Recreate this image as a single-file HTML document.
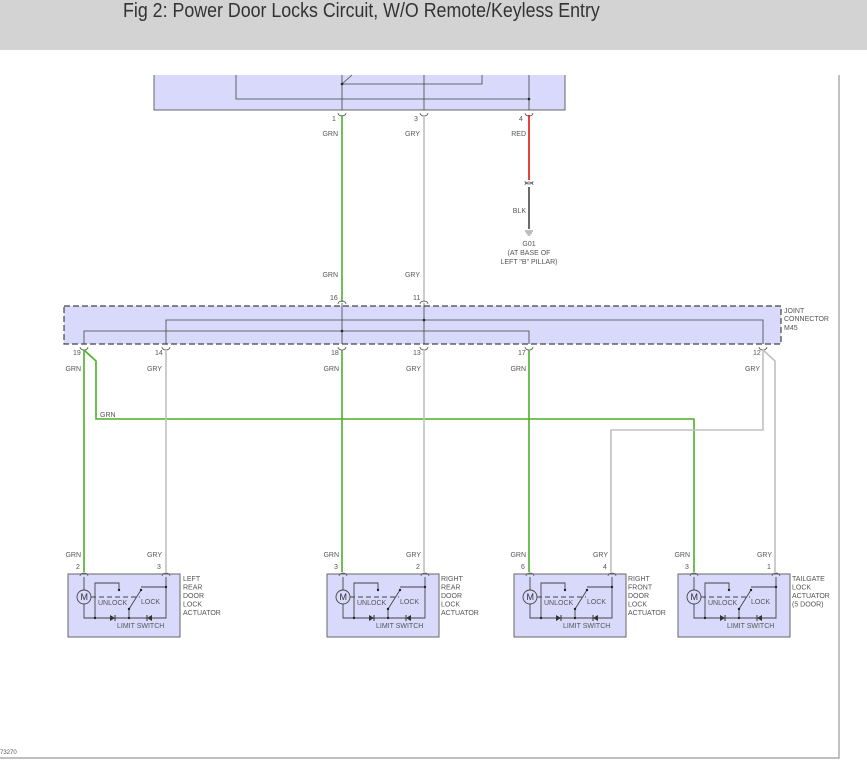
<!DOCTYPE html>
<html><head><meta charset="utf-8"><style>
html,body{margin:0;padding:0;width:867px;height:766px;overflow:hidden;background:#fff}
.hdr{position:absolute;left:0;top:0;width:867px;height:50px;background:#d3d3d3}
.hdr span{position:absolute;left:123px;top:0px;font-family:"Liberation Sans Narrow","Liberation Sans",sans-serif;font-size:20px;color:#333;transform:scaleX(0.89);transform-origin:0 0;white-space:nowrap}
svg{position:absolute;left:0;top:0}
text{font-family:"Liberation Sans",sans-serif;font-size:7px;fill:#555}
</style></head><body>
<div class="hdr"><span>Fig 2: Power Door Locks Circuit, W/O Remote/Keyless Entry</span></div>
<svg width="867" height="766" viewBox="0 0 867 766">
<defs>
<g id="act">
  <rect x="0" y="0" width="112" height="63" fill="#d9d9fb" stroke="#666" stroke-width="1"/>
  <circle cx="16" cy="23" r="7" fill="none" stroke="#444" stroke-width="0.9"/>
  <text x="12.5" y="26" style="font-size:9px;fill:#333">M</text>
  <path d="M16 3V16M16 30V44H98V3M27 44V9H51V16M73 13H98M61 35L73 16M61 35V44" fill="none" stroke="#444" stroke-width="0.9"/>
  <path d="M23 23H72" stroke="#444" stroke-width="1" stroke-dasharray="5,3"/>
  <path d="M42 41V47L47 44Z M79 44L84 41V47Z" fill="#333"/>
  <path d="M47 41V47M79 41V47" stroke="#333"/>
  <circle cx="27" cy="44" r="1.2" fill="#222"/><circle cx="61" cy="44" r="1.2" fill="#222"/><circle cx="61" cy="35" r="1.2" fill="#222"/><circle cx="73" cy="16" r="1.2" fill="#222"/><circle cx="51" cy="16" r="1.2" fill="#222"/><circle cx="98" cy="13" r="1.2" fill="#222"/>
  <text x="30" y="31">UNLOCK</text><text x="73" y="30">LOCK</text><text x="49" y="54">LIMIT SWITCH</text>
  <path d="M12 2A4 3 0 0 1 20 2M94 2A4 3 0 0 1 102 2" fill="none" stroke="#555" stroke-width="0.8"/>
</g>
</defs>
<path d="M839 75V758H0" fill="none" stroke="#999" stroke-width="1.2"/>
<rect x="154" y="75" width="411" height="35" fill="#d9d9fb"/>
<path d="M154 75V110H565V75" fill="none" stroke="#666" stroke-width="1"/>
<path d="M236 75V99H529M482 75V84H342M342 84L352 75M342 75V110M424 75V110M529 75V110" fill="none" stroke="#444" stroke-width="0.8"/>
<circle cx="342" cy="84" r="1.3" fill="#222"/><circle cx="529" cy="99" r="1.3" fill="#222"/>
<g fill="none" stroke="#555" stroke-width="0.8">
<path d="M338 113A4 3 0 0 0 346 113M420 113A4 3 0 0 0 428 113M525 113A4 3 0 0 0 533 113"/>
<path d="M525 181A4 3 0 0 0 533 181M525 185A4 3 0 0 1 533 185"/>
</g>
<path d="M342 115V302" stroke="#4caf28" stroke-width="1.6"/>
<path d="M424 115V302" stroke="#c0c0c0" stroke-width="1.6"/>
<path d="M529 115V180" stroke="#e01010" stroke-width="1.6"/>
<path d="M529 187V229" stroke="#444" stroke-width="1.6"/>
<path d="M525 231H533M526 233H532M527.5 235H530.5" stroke="#555" stroke-width="0.8"/>
<text x="332" y="121">1</text><text x="414" y="121">3</text><text x="519" y="121">4</text>
<text x="338" y="136" text-anchor="end">GRN</text><text x="420" y="136" text-anchor="end">GRY</text><text x="526" y="136" text-anchor="end">RED</text>
<text x="526" y="213" text-anchor="end">BLK</text>
<text x="529" y="246" text-anchor="middle">G01</text>
<text x="529" y="255" text-anchor="middle">(AT BASE OF</text>
<text x="529" y="264" text-anchor="middle">LEFT "B" PILLAR)</text>
<text x="338" y="277" text-anchor="end">GRN</text><text x="420" y="277" text-anchor="end">GRY</text>
<text x="330" y="300">16</text><text x="413" y="300">11</text>
<rect x="64" y="306" width="717" height="38" fill="#d9d9fb" stroke="#444" stroke-width="1.2" stroke-dasharray="6,3"/>
<path d="M166 344V320H763V344M84 344V331H529V344M342 303V344M424 303V344" fill="none" stroke="#444" stroke-width="0.8"/>
<circle cx="342" cy="331" r="1.3" fill="#222"/><circle cx="424" cy="320" r="1.3" fill="#222"/>
<g fill="none" stroke="#555" stroke-width="0.8">
<path d="M338 304A4 3 0 0 1 346 304M420 304A4 3 0 0 1 428 304"/>
<path d="M80 347A4 3 0 0 0 88 347M162 347A4 3 0 0 0 170 347M338 347A4 3 0 0 0 346 347M420 347A4 3 0 0 0 428 347M525 347A4 3 0 0 0 533 347M759 347A4 3 0 0 0 767 347"/>
</g>
<text x="784" y="313">JOINT</text><text x="784" y="321">CONNECTOR</text><text x="784" y="330">M45</text>
<text x="73" y="355">19</text><text x="155" y="355">14</text><text x="331" y="355">18</text><text x="413" y="355">13</text><text x="518" y="355">17</text><text x="753" y="355">12</text>
<text x="81" y="371" text-anchor="end">GRN</text><text x="162" y="371" text-anchor="end">GRY</text><text x="339" y="371" text-anchor="end">GRN</text><text x="421" y="371" text-anchor="end">GRY</text><text x="526" y="371" text-anchor="end">GRN</text><text x="760" y="371" text-anchor="end">GRY</text>
<g fill="none" stroke-width="1.6">
<path d="M84 350V572" stroke="#4caf28"/>
<path d="M84 350L96 361V419H694V572" stroke="#4caf28"/>
<path d="M342 350V572" stroke="#4caf28"/>
<path d="M529 350V572" stroke="#4caf28"/>
<path d="M166 350V572" stroke="#c0c0c0"/>
<path d="M424 350V572" stroke="#c0c0c0"/>
<path d="M763 350V430H611V572" stroke="#c0c0c0"/>
<path d="M763 350L775 361V572" stroke="#c0c0c0"/>
</g>
<text x="100" y="417">GRN</text>
<g transform="translate(68,574)"><use href="#act"/></g>
<g transform="translate(327,574)"><use href="#act"/></g>
<g transform="translate(514,574)"><use href="#act"/></g>
<g transform="translate(678,574)"><use href="#act"/></g>
<text x="81" y="557" text-anchor="end">GRN</text><text x="162" y="557" text-anchor="end">GRY</text>
<text x="339" y="557" text-anchor="end">GRN</text><text x="421" y="557" text-anchor="end">GRY</text>
<text x="526" y="557" text-anchor="end">GRN</text><text x="608" y="557" text-anchor="end">GRY</text>
<text x="690" y="557" text-anchor="end">GRN</text><text x="772" y="557" text-anchor="end">GRY</text>
<text x="76" y="569">2</text><text x="157" y="569">3</text>
<text x="334" y="569">3</text><text x="416" y="569">2</text>
<text x="521" y="569">6</text><text x="603" y="569">4</text>
<text x="685" y="569">3</text><text x="767" y="569">1</text>
<g>
<text x="183" y="581">LEFT</text><text x="183" y="589.5">REAR</text><text x="183" y="598">DOOR</text><text x="183" y="606.5">LOCK</text><text x="183" y="615">ACTUATOR</text>
<text x="441" y="581">RIGHT</text><text x="441" y="589.5">REAR</text><text x="441" y="598">DOOR</text><text x="441" y="606.5">LOCK</text><text x="441" y="615">ACTUATOR</text>
<text x="628" y="581">RIGHT</text><text x="628" y="589.5">FRONT</text><text x="628" y="598">DOOR</text><text x="628" y="606.5">LOCK</text><text x="628" y="615">ACTUATOR</text>
<text x="792" y="581">TAILGATE</text><text x="792" y="589.5">LOCK</text><text x="792" y="598">ACTUATOR</text><text x="792" y="606.5">(5 DOOR)</text>
</g>
<text x="0" y="754" style="font-size:6px">73270</text>
</svg>
</body></html>
